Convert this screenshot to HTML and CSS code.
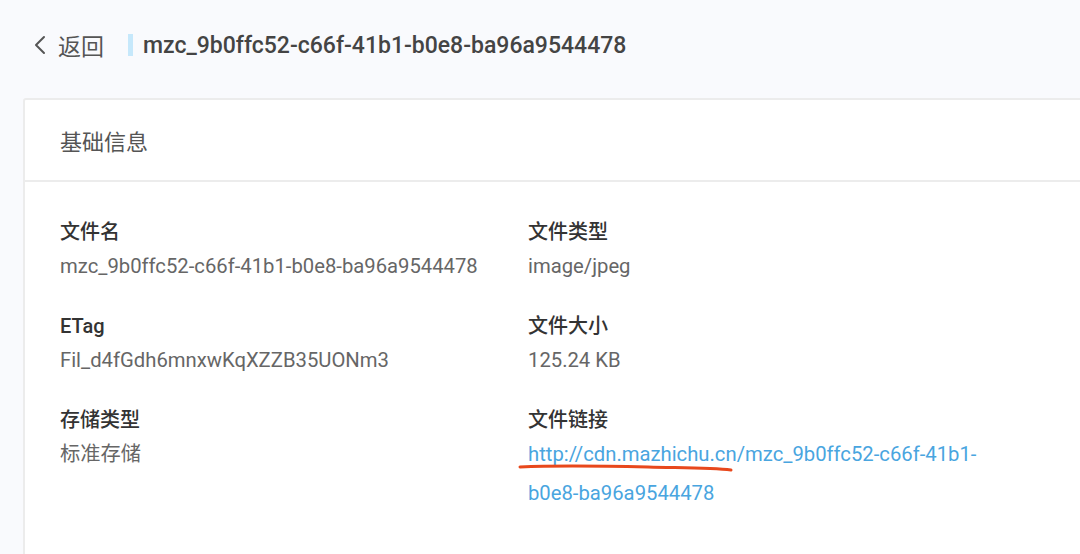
FILE: index.html
```html
<!DOCTYPE html>
<html lang="zh">
<head>
<meta charset="utf-8">
<title>文件详情</title>
<link rel="stylesheet" href="styles.css">
</head>
<body>
<div class="page">
  <header class="topbar">
    <a class="back" href="#">
      <svg class="chev" width="12" height="20" viewBox="0 0 12 20"><path d="M10 2 L2 10 L10 18" fill="none" stroke="#555" stroke-width="2" stroke-linecap="round" stroke-linejoin="round"/></svg>
      <span>返回</span>
    </a>
    <span class="bar"></span>
    <h1 class="title">mzc_9b0ffc52-c66f-41b1-b0e8-ba96a9544478</h1>
  </header>
  <section class="card">
    <div class="card-head">基础信息</div>
    <div class="card-body">
      <div class="item">
        <div class="label">文件名</div>
        <div class="value">mzc_9b0ffc52-c66f-41b1-b0e8-ba96a9544478</div>
      </div>
      <div class="item">
        <div class="label">文件类型</div>
        <div class="value">image/jpeg</div>
      </div>
      <div class="item">
        <div class="label">ETag</div>
        <div class="value">Fil_d4fGdh6mnxwKqXZZB35UONm3</div>
      </div>
      <div class="item">
        <div class="label">文件大小</div>
        <div class="value">125.24 KB</div>
      </div>
      <div class="item">
        <div class="label">存储类型</div>
        <div class="value">标准存储</div>
      </div>
      <div class="item">
        <div class="label">文件链接</div>
        <div class="value link-wrap">
          <a class="link" href="#">http://cdn.mazhichu.cn/mzc_9b0ffc52-c66f-41b1-b0e8-ba96a9544478</a>
          <svg class="scribble" width="220" height="12" viewBox="0 0 220 12"><path d="M2 4 C 40 2, 90 3, 130 4 S 195 5, 213 7" fill="none" stroke="#e8481c" stroke-width="3" stroke-linecap="round"/></svg>
        </div>
      </div>
    </div>
  </section>
</div>
</body>
</html>
```
FILE: styles.css
```css
* { box-sizing: border-box; }
html, body {
  margin: 0;
  padding: 0;
  background: #f9fafd;
  overflow: hidden;
}
body {
  font-family: Roboto, "Noto Sans CJK SC", sans-serif;
  color: #333;
}
.page {
  width: 1080px;
  height: 554px;
  overflow: hidden;
}
.topbar {
  display: flex;
  align-items: center;
  height: 90px;
  padding: 0 0 0 34px;
}
.back {
  display: flex;
  align-items: center;
  gap: 12px;
  color: #555;
  text-decoration: none;
  font-size: 23px;
}
.chev { display: block; }
.bar {
  width: 5px;
  height: 22px;
  background: #c6e8fb;
  margin-left: 24px;
  margin-right: 10px;
}
.title {
  margin: 0;
  font-size: 23px;
  font-weight: 500;
  color: #444;
}
.card {
  margin: 8px 0 0 23px;
  width: 1100px;
  background: #fff;
  border: 2px solid #ececec;
  border-radius: 3px;
}
.card-head {
  height: 82px;
  display: flex;
  align-items: center;
  padding-left: 35px;
  font-size: 22px;
  color: #555;
  border-bottom: 2px solid #ececec;
}
.card-body {
  display: grid;
  grid-template-columns: 468px 470px;
  row-gap: 25px;
  padding: 35px 0 60px 35px;
}
.label {
  font-size: 20px;
  line-height: 30px;
  font-weight: 500;
  color: #333;
}
.value {
  font-size: 20.25px;
  line-height: 39px;
  color: #666;
}
.link-wrap { position: relative; }
.link {
  color: #49a5df;
  text-decoration: none;
}
.scribble {
  position: absolute;
  left: -10px;
  top: 28px;
}
```
